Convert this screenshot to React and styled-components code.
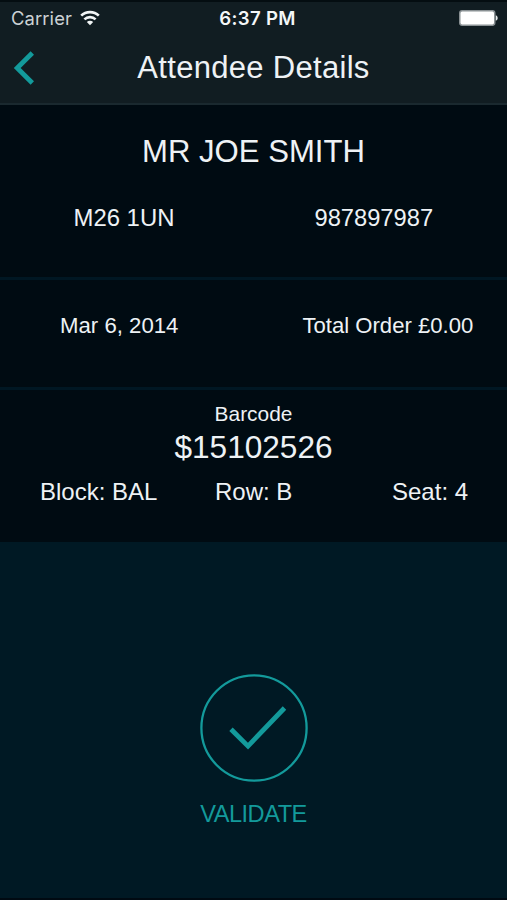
import React from 'react'
import styled, { createGlobalStyle } from 'styled-components'

const teal = '#139a9b'

const seatInfo = [
  { label: 'Block', value: 'BAL' },
  { label: 'Row', value: 'B' },
  { label: 'Seat', value: '4' },
]

const WifiIcon = () => (
  <svg width="20" height="16" viewBox="0 0 20 16" fill="none" stroke="#f2f5f6" strokeWidth="2.6">
    <path d="M1.2 5.7C6 0.9 14 0.9 18.8 5.7" />
    <path d="M4.4 9.4C7.5 6.4 12.5 6.4 15.6 9.4" />
    <path d="M10 15.2L6.8 12C8.6 10.2 11.4 10.2 13.2 12Z" fill="#f2f5f6" stroke="none" />
  </svg>
)

const BatteryIcon = () => (
  <svg width="39" height="17" viewBox="0 0 39 17">
    <rect x="0.75" y="0.75" width="35" height="14.5" rx="2.4" fill="#fff" stroke="#8a9194" strokeWidth="1.5" />
    <path d="M36.8 5.2C39.3 6 39.3 10 36.8 10.8Z" fill="#e4e8e9" />
  </svg>
)

const App = () => (
  <Screen>
    <GlobalStyle />
    <Header>
      <StatusBar>
        <Carrier>
          <StatusText $spacing="0.1px">Carrier</StatusText>
          <WifiIcon />
        </Carrier>
        <StatusText $bold $spacing="0.3px">6:37 PM</StatusText>
        <Battery>
          <BatteryIcon />
        </Battery>
      </StatusBar>
      <NavBar>
        <BackButton aria-label="Back">
          <svg width="22" height="34" viewBox="0 0 22 34" fill="none" stroke={teal} strokeWidth="4.8">
            <path d="M19.3 2L4.2 17L19.3 32" />
          </svg>
        </BackButton>
        <Text as="h1" $size={31} $spacing="0.3px">Attendee Details</Text>
        <span />
      </NavBar>
    </Header>

    <Panel $height={175}>
      <Center $top={29}>
        <Text as="h2" $size={31.1}>MR JOE SMITH</Text>
      </Center>
      <Row $top={30} $columns="73.5px 241px auto">
        <Text $size={23.9}>M26 1UN</Text>
        <Text $size={23.7}>987897987</Text>
      </Row>
    </Panel>

    <Panel $height={110}>
      <Row $top={28} $columns="60px 242.5px auto">
        <Text $size={22.2}>Mar 6, 2014</Text>
        <Text $size={22.1}>Total Order £0.00</Text>
      </Row>
    </Panel>

    <Panel $height={152} $last>
      <Center $top={7}>
        <Text $size={20.9} $line={33}>Barcode</Text>
      </Center>
      <Center $top={0}>
        <Text $size={31.6} $line={34}>$15102526</Text>
      </Center>
      <Row $top={10} $columns="40px 175px 177px auto">
        {seatInfo.map(({ label, value }) => (
          <Text key={label} $size={24}>{label}: {value}</Text>
        ))}
      </Row>
    </Panel>

    <Validate>
      <svg width="108" height="108" viewBox="0 0 108 108" fill="none" stroke={teal}>
        <circle cx="54" cy="54" r="52.6" strokeWidth="2.3" />
        <path d="M31 55.2L48 72.1L84.5 34" strokeWidth="4.8" />
      </svg>
      <Text $size={23.6} $spacing="-0.5px" $color={teal}>VALIDATE</Text>
    </Validate>
  </Screen>
)

const GlobalStyle = createGlobalStyle`
  * {
    box-sizing: border-box;
  }

  body {
    margin: 0;
    background: #000a10;
  }
`

const Screen = styled.main`
  display: flex;
  flex-direction: column;
  width: 507px;
  height: 900px;
  overflow: hidden;
  background: #001924;
  border-bottom: 2px solid #000a12;
  font-family: 'Liberation Sans', Arial, sans-serif;
`

const Header = styled.header`
  flex: none;
  height: 105px;
  background: #111d22;
  border-top: 2px solid #040d11;
  border-bottom: 2px solid #1a292f;
`

const StatusBar = styled.div`
  display: grid;
  grid-template-columns: 1fr auto 1fr;
  align-items: center;
  height: 32px;
  padding: 0 9px 0 11px;
`

const Carrier = styled.div`
  display: flex;
  align-items: center;
  gap: 8px;
`

const StatusText = styled.span`
  padding-left: ${props => props.$bold ? '6px' : 0};
  font-family: Inter, sans-serif;
  font-size: ${props => props.$bold ? '18.6px' : '18.4px'};
  font-weight: ${props => props.$bold ? 600 : 400};
  letter-spacing: ${props => props.$spacing || 0};
  line-height: 24px;
  color: ${props => props.$bold ? '#f4f7f8' : '#ccd2d5'};
  white-space: nowrap;
`

const Battery = styled.div`
  display: flex;
  justify-content: flex-end;
`

const NavBar = styled.nav`
  display: grid;
  grid-template-columns: 1fr auto 1fr;
  align-items: center;
  height: 67px;
  padding: 0 13px;
`

const BackButton = styled.button`
  display: flex;
  justify-self: start;
  padding: 0;
  border: 0;
  background: none;
`

const Text = styled.span`
  margin: 0;
  font-size: ${props => props.$size}px;
  font-weight: 400;
  line-height: ${props => props.$line || 36}px;
  letter-spacing: ${props => props.$spacing || 0};
  color: ${props => props.$color || '#eef2f5'};
  white-space: nowrap;
`

const Panel = styled.section`
  flex: none;
  height: ${props => props.$height}px;
  background: #000b12;
  border-bottom: ${props => props.$last ? 0 : '3px solid #001723'};
`

const Center = styled.div`
  display: flex;
  justify-content: center;
  padding-top: ${props => props.$top}px;
`

const Row = styled.div`
  display: grid;
  grid-template-columns: ${props => props.$columns};
  padding-top: ${props => props.$top}px;

  &::before {
    content: '';
  }
`

const Validate = styled.button`
  display: flex;
  flex: 1;
  flex-direction: column;
  align-items: center;
  gap: 14px;
  padding: 131.5px 0 0;
  border: 0;
  background: none;
  font-family: inherit;
`

export default App
